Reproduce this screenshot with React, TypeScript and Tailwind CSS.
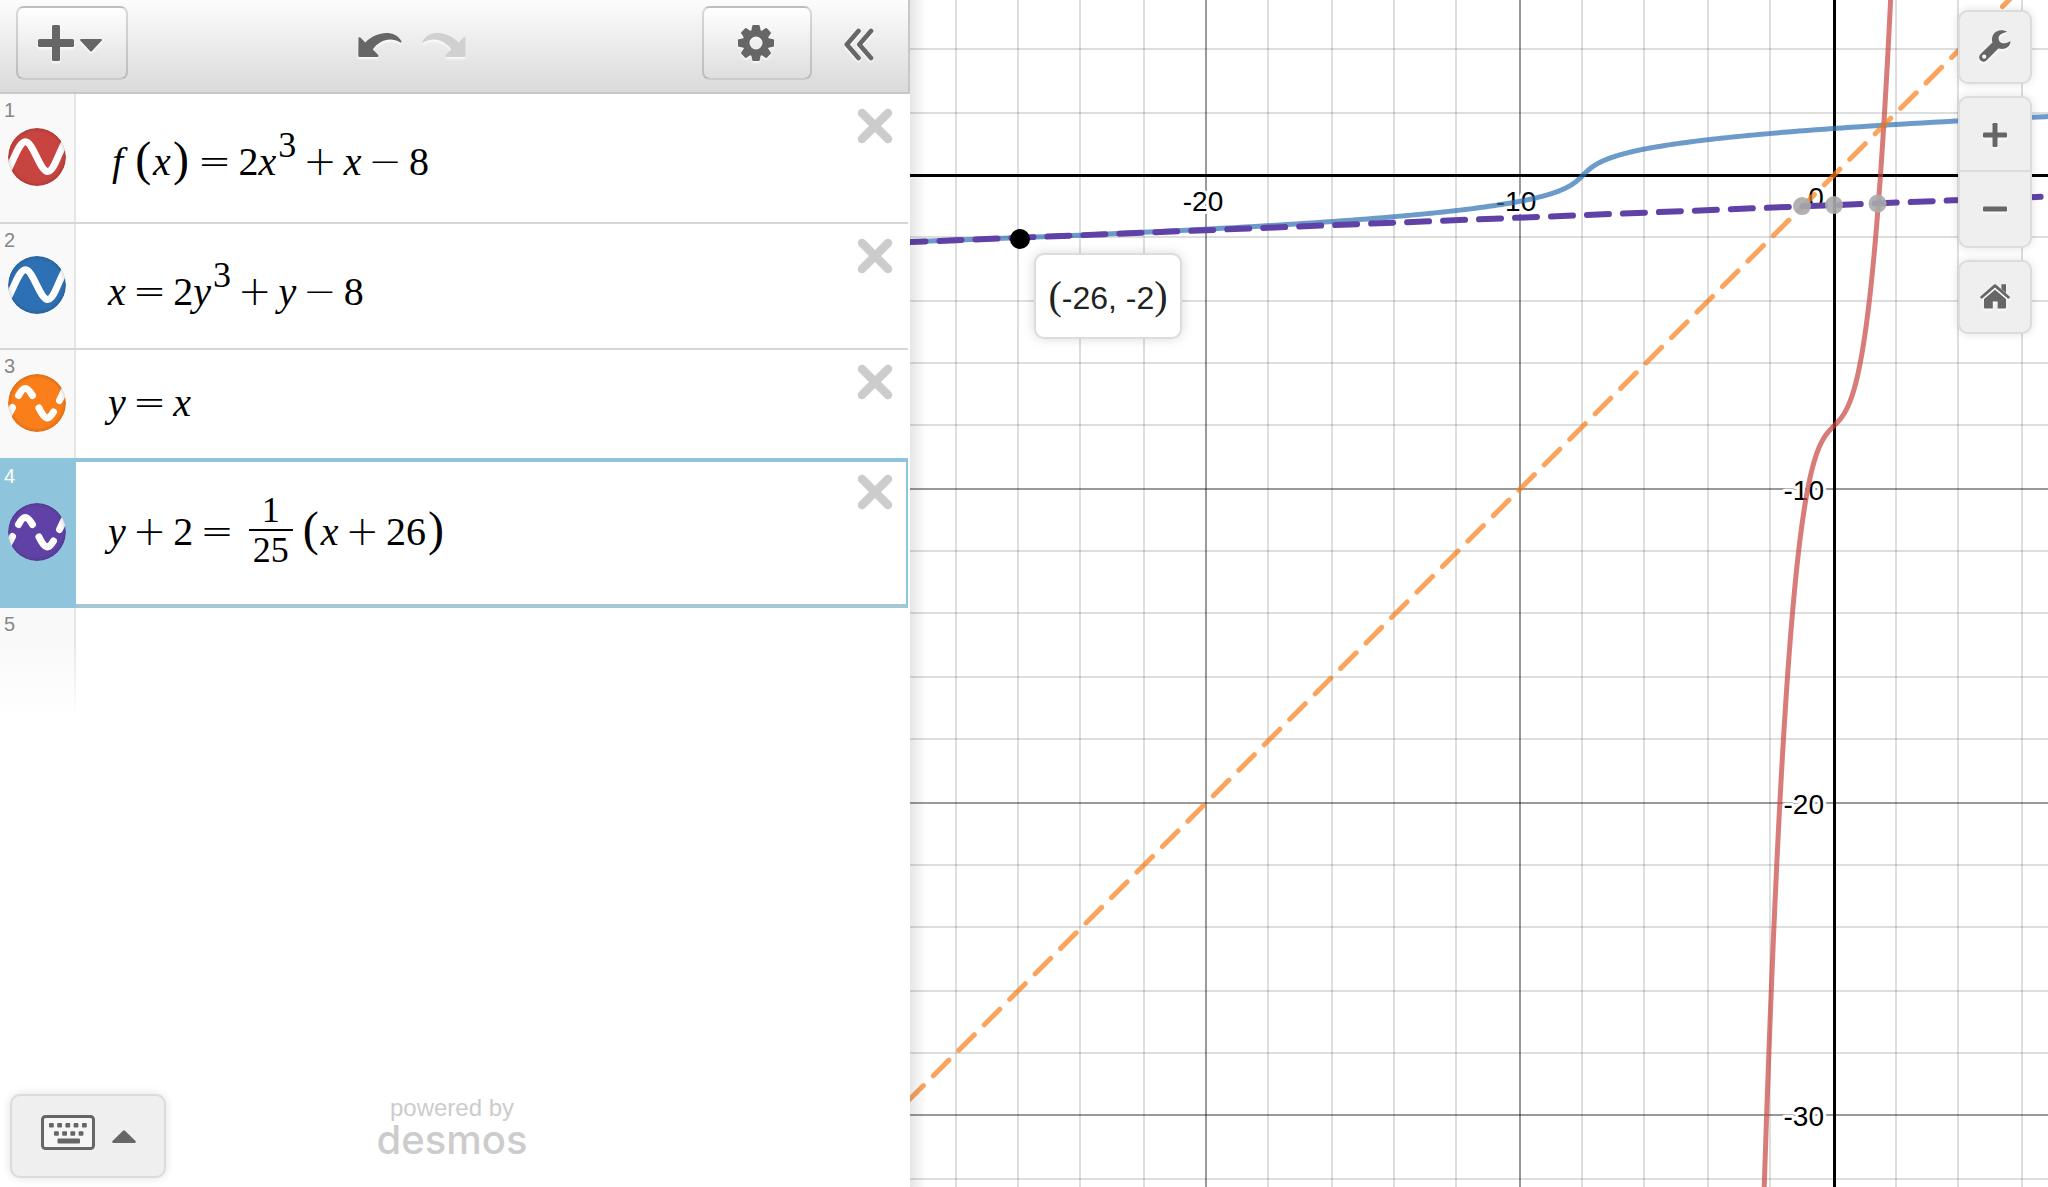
import type { ReactNode } from 'react';

type IconProps = { className?: string };

const ORIGIN_X = 924;
const ORIGIN_Y = 175;
const UNIT = 31.35;
const VIEW_W = 1138;
const VIEW_H = 1187;

const toX = (x: number) => ORIGIN_X + x * UNIT;
const toY = (y: number) => ORIGIN_Y - y * UNIT;

const range = (from: number, to: number, step: number) => {
  const out: number[] = [];
  for (let v = from; v <= to + step / 2; v += step) out.push(v);
  return out;
};

const cubic = (t: number) => 2 * t ** 3 + t - 8;
const tangent = (x: number) => (x + 26) / 25 - 2;

const toPath = (points: number[][]) =>
  points.map(([x, y], i) => `${i ? 'L' : 'M'}${toX(x).toFixed(2)} ${toY(y).toFixed(2)}`).join('');

const redPath = toPath(range(-3, 3, 0.02).map((t) => [t, cubic(t)]));
const bluePath = toPath(range(-3, 3, 0.02).map((t) => [cubic(t), t]));

// Grid lines sit on whole device pixels
const snapX = (x: number) => 2 * Math.floor(toX(x) / 2);
const snapY = (y: number) => 2 * Math.floor(toY(y) / 2) + 1;

const xTicks = range(-28, 6, 2).filter((v) => v !== 0);
const yTicks = range(-32, 4, 2).filter((v) => v !== 0);

function CloseIcon({ className }: IconProps) {
  return (
    <svg viewBox="0 0 36 36" className={className} aria-hidden="true">
      <path d="M5 5 31 31M31 5 5 31" stroke="currentColor" strokeWidth="8.5" strokeLinecap="round" />
    </svg>
  );
}

function GearIcon({ className }: IconProps) {
  return (
    <svg viewBox="-18 -18 36 36" className={className} fill="currentColor" aria-hidden="true">
      {[0, 45, 90, 135, 180, 225, 270, 315].map((a) => (
        <path key={a} transform={`rotate(${a})`} d="M-5 -11 -3.7 -17.2Q-3.5 -18 -2.7 -18H2.7Q3.5 -18 3.7 -17.2L5 -11Z" />
      ))}
      <circle r="9.9" fill="none" stroke="currentColor" strokeWidth="6.8" />
    </svg>
  );
}

function UndoIcon({ className }: IconProps) {
  return (
    <svg viewBox="0 0 44 24" className={className} fill="currentColor" aria-hidden="true">
      <path d="M.5 4.6Q1.4 3.6 2.6 4.8L7.3 9.4C18 -1 36 -4.5 43.6 8.4Q43.6 9.8 42 9.2C32 3.5 21 7.5 14.8 16.6L20 21.8Q21 23.4 19.4 24H2Q.3 24 .3 22.4Z" />
    </svg>
  );
}

function ChevronsIcon({ className }: IconProps) {
  return (
    <svg viewBox="0 0 30 33" className={className} fill="none" stroke="currentColor" strokeWidth="4.6" strokeLinecap="round" strokeLinejoin="round" aria-hidden="true">
      <path d="M14.5 3 2.8 16.5 14.5 30M27 3 15.3 16.5 27 30" />
    </svg>
  );
}

function KeyboardIcon({ className }: IconProps) {
  return (
    <svg viewBox="0 0 54 35" className={className} fill="currentColor" aria-hidden="true">
      <rect x="1.5" y="1.5" width="51" height="32" rx="3" fill="#f6f6f6" stroke="currentColor" strokeWidth="3" />
      {[8, 16.2, 24.4, 32.6, 41].map((x) => (
        <rect key={x} x={x} y="8" width="4.8" height="4.6" rx="1" />
      ))}
      {[13, 21.2, 29.4, 37.6].map((x) => (
        <rect key={x} x={x} y="16.2" width="4.8" height="4.6" rx="1" />
      ))}
      <rect x="16.5" y="23.6" width="22.5" height="4.8" rx="1" />
    </svg>
  );
}

function WrenchIcon({ className }: IconProps) {
  return (
    <svg viewBox="0 0 32 32" className={className} aria-hidden="true">
      <path
        fill="currentColor"
        fillRule="evenodd"
        d="M28 1.8C23.5 -.8 17 -.2 14 5C12.8 7.4 12.7 10 13.4 12.4L1.4 24.3A4.2 4.2 0 0 0 7.4 30.4L19.4 18.4C25.5 20 31 17.6 31.6 11.2L26.5 13.2C21.6 14 19 11 19.8 6.8C20.8 4.2 23.8 3 28 1.8ZM5.2 24.6A2.1 2.1 0 1 0 5.2 28.8 2.1 2.1 0 1 0 5.2 24.6Z"
      />
    </svg>
  );
}

function HomeIcon({ className }: IconProps) {
  return (
    <svg viewBox="0 0 30 26" className={className} fill="currentColor" aria-hidden="true">
      <path d="M21.4 1.2H26V10L21.4 6Z" />
      <path d="M1.6 14.2 15 2.6 28.4 14.2" fill="none" stroke="currentColor" strokeWidth="2.8" strokeLinecap="round" strokeLinejoin="round" />
      <path d="M15 6.8 26 16V24.6Q26 25.4 25.2 25.4H17.6V18.4H12.8V25.4H4.8Q4 25.4 4 24.6V16Z" />
    </svg>
  );
}

function PlusIcon({ className }: IconProps) {
  return (
    <svg viewBox="0 0 36 36" className={className} fill="currentColor" aria-hidden="true">
      <rect x="14" y="0" width="8" height="36" rx="1.5" />
      <rect x="0" y="14" width="36" height="8" rx="1.5" />
    </svg>
  );
}

function CurveIcon({ color, dashed }: { color: string; dashed?: boolean }) {
  const id = `clip-${color.slice(1)}`;
  return (
    <svg viewBox="0 0 58 58" className="size-[58px]" aria-hidden="true">
      <defs>
        <clipPath id={id}>
          <circle cx="29" cy="29" r="29" />
        </clipPath>
        <radialGradient id={`${id}-shade`}>
          <stop offset="0.85" stopColor="#000" stopOpacity="0" />
          <stop offset="1" stopColor="#000" stopOpacity="0.12" />
        </radialGradient>
      </defs>
      <g clipPath={`url(#${id})`} fill="none" stroke="#fff" strokeWidth="7" strokeLinecap="round">
        <circle cx="29" cy="29" r="29" fill={color} stroke="none" />
        {dashed ? (
          <path d="M10.5 21.5C15.5 12 19 12 24.5 21.5M31 34C37 46.5 40.5 46.5 45.5 38M51.5 26.5 56 17M0 42 4.5 33.5" />
        ) : (
          <path d="M-2 46C6 32 11 13.7 17.5 13.7C25 13.7 32 43.5 39.7 43.5C46 43.5 50 26 58 12" />
        )}
        <circle cx="29" cy="29" r="29" fill={`url(#${id}-shade)`} stroke="none" />
      </g>
    </svg>
  );
}

const Var = ({ children }: { children: ReactNode }) => <i>{children}</i>;

const Op = ({ children }: { children: ReactNode }) => (
  <span className="mx-[7px] font-['DejaVu_Sans'] font-extralight">{children}</span>
);

const Paren = ({ children }: { children: ReactNode }) => (
  <span className="mx-[2px] text-[48px]">{children}</span>
);

const Cubed = () => <span className="ml-[2px] -translate-y-[18px] text-[36px]">3</span>;

type Expression = {
  color: string;
  dashed?: boolean;
  rowClass: string;
  bodyClass: string;
  active?: boolean;
  body: ReactNode;
};

const expressions: Expression[] = [
  {
    color: '#c74440',
    rowClass: 'h-[130px] border-b-2 border-[#d6d6d6]',
    bodyClass: 'pt-[6px]',
    body: (
      <>
        <span className="mr-[10px] ml-1 italic">f</span>
        <Paren>(</Paren>
        <Var>x</Var>
        <Paren>)</Paren>
        <Op>=</Op>2<Var>x</Var>
        <Cubed />
        <Op>+</Op>
        <Var>x</Var>
        <Op>−</Op>8
      </>
    ),
  },
  {
    color: '#2d70b3',
    rowClass: 'h-[126px] border-b-2 border-[#d6d6d6]',
    bodyClass: 'pt-3',
    body: (
      <>
        <Var>x</Var>
        <Op>=</Op>2<Var>y</Var>
        <Cubed />
        <Op>+</Op>
        <Var>y</Var>
        <Op>−</Op>8
      </>
    ),
  },
  {
    color: '#fa7e19',
    dashed: true,
    rowClass: 'h-[108px]',
    bodyClass: 'pb-1',
    body: (
      <>
        <Var>y</Var>
        <Op>=</Op>
        <Var>x</Var>
      </>
    ),
  },
  {
    color: '#6042a6',
    dashed: true,
    rowClass: 'h-[150px] bg-[#8ec5dc]',
    bodyClass: 'pb-[6px]',
    active: true,
    body: (
      <>
        <Var>y</Var>
        <Op>+</Op>2<Op>=</Op>
        <span className="-my-5 mx-2 inline-flex flex-col self-center text-center text-[36px] leading-[38px]">
          <span className="border-b-2 border-black px-1">1</span>
          <span className="px-1">25</span>
        </span>
        <Paren>(</Paren>
        <Var>x</Var>
        <Op>+</Op>26
        <Paren>)</Paren>
      </>
    ),
  },
];

function ExpressionRow({ expr, index }: { expr: Expression; index: number }) {
  return (
    <li className={`flex ${expr.rowClass}`}>
      <div
        className={`relative flex w-[76px] shrink-0 items-center border-r-2 pb-[2px] pl-2 ${
          expr.active ? 'border-[#8ec5dc] text-white' : 'border-[#e6e6e6] bg-[#f9f9f9] text-[#888]'
        }`}
      >
        <span className={`absolute left-1 text-[20px] leading-6 ${expr.active ? 'top-[6px]' : 'top-1'}`}>{index + 1}</span>
        <button type="button" aria-label={`Toggle expression ${index + 1}`} className="rounded-full">
          <CurveIcon color={expr.color} dashed={expr.dashed} />
        </button>
      </div>
      <div
        className={`flex flex-1 items-start justify-between bg-white ${
          expr.active ? 'border-t-4 border-r-2 border-b-4 border-t-[#8ec5dc] border-r-[#8ec5dc] border-b-[#a5c6d3] pr-[13px]' : 'pr-[15px]'
        }`}
      >
        <div className={`flex h-full items-center pl-8 ${expr.bodyClass}`}>
          <div className="flex items-baseline font-['Liberation_Serif',serif] text-[40px] leading-[48px] text-black">
            {expr.body}
          </div>
        </div>
        <button type="button" aria-label={`Delete expression ${index + 1}`} className={`text-[#ccc] ${expr.active ? 'pt-3' : 'pt-[14px]'}`}>
          <CloseIcon className="size-9" />
        </button>
      </div>
    </li>
  );
}

function Toolbar() {
  const button =
    'flex h-[74px] items-center justify-center rounded-lg border-2 border-black/15 border-b-black/20 bg-linear-to-b from-white to-[#dedede]';
  return (
    <header className="flex h-[94px] items-start border-r-2 border-b-2 border-[#c8c8c8] bg-linear-to-b from-[#fcfcfc] to-[#dadada] pt-[6px] pr-[34px] pl-4 text-[#666] [&_svg]:drop-shadow-[0_2px_1px_rgba(255,255,255,0.8)]">
      <button type="button" aria-label="Add item" className={`${button} w-[112px] gap-[6px] pr-1`}>
        <PlusIcon className="size-9" />
        <svg viewBox="0 0 22 13" className="mt-1 h-[13px] w-[22px]" fill="currentColor" aria-hidden="true">
          <path d="M1 0H21Q22.5 .5 21.5 1.8L12 12Q11 13 10 12L.5 1.8Q-.5 .5 1 0Z" />
        </svg>
      </button>
      <div className="flex h-[78px] flex-1 items-center justify-center gap-5 pr-[6px]">
        <button type="button" aria-label="Undo">
          <UndoIcon className="h-6 w-11" />
        </button>
        <button type="button" aria-label="Redo" disabled className="text-[#d0d0d0]">
          <UndoIcon className="h-6 w-11 -scale-x-100" />
        </button>
      </div>
      <button type="button" aria-label="Edit list" className={`${button} w-[110px] pr-[2px]`}>
        <GearIcon className="size-9" />
      </button>
      <button type="button" aria-label="Hide list" className="ml-8 flex h-[76px] items-center">
        <ChevronsIcon className="h-[33px] w-[30px]" />
      </button>
    </header>
  );
}

function Sidebar() {
  return (
    <aside className="z-10 flex w-[910px] shrink-0 flex-col bg-white">
      <Toolbar />
      <div className="mr-[2px] flex flex-1 flex-col">
        <ol>
          {expressions.map((expr, i) => (
            <ExpressionRow key={expr.color} expr={expr} index={i} />
          ))}
          <li className="flex h-[110px]">
            <div className="relative w-[76px] border-r-2 border-[#e6e6e6] bg-[#f9f9f9] pt-1 pl-1 text-[20px] leading-6 text-[#888]">
              5
              <div className="absolute inset-y-0 left-0 w-[76px] bg-linear-to-b from-transparent from-30% to-white" />
            </div>
          </li>
        </ol>
        <footer className="relative mt-auto flex items-end justify-center pb-[9px]">
          <button
            type="button"
            aria-label="Show keypad"
            className="absolute bottom-[9px] left-[10px] flex h-[84px] w-[156px] items-center justify-center gap-[17px] rounded-[10px] border-2 border-[#dcdcdc] bg-[#efefef] pb-2 text-[#666] shadow-[0_0_10px_rgba(0,0,0,0.12)]"
          >
            <KeyboardIcon className="h-[35px] w-[54px]" />
            <svg viewBox="0 0 24 13" className="mt-2 h-[13px] w-6" fill="currentColor" aria-hidden="true">
              <path d="M11 .8Q12 -.2 13 .8L23.5 11Q24.4 12.6 22.8 13H1.2Q-.4 12.6 .5 11Z" />
            </svg>
          </button>
          <a href="#desmos" className="-ml-1 flex flex-col items-center pb-[18px] text-[#ccc]">
            <span className="text-[24px] leading-6">powered by</span>
            <span className="font-['Inter',sans-serif] text-[40px] leading-10 font-medium">desmos</span>
          </a>
        </footer>
      </div>
    </aside>
  );
}

function Graph() {
  const halo = 'fill-black stroke-white stroke-[6px] [paint-order:stroke] [stroke-linejoin:round]';
  return (
    <svg viewBox={`0 0 ${VIEW_W} ${VIEW_H}`} preserveAspectRatio="xMinYMin slice" className="absolute inset-0 size-full" role="img" aria-label="Graph">
      <g stroke="#000" strokeWidth="2">
        {xTicks.map((v) => (
          <line key={v} x1={snapX(v)} x2={snapX(v)} y1="0" y2={VIEW_H} strokeOpacity={v % 10 ? 0.13 : 0.4} />
        ))}
        {yTicks.map((v) => (
          <line key={v} x1="0" x2={VIEW_W} y1={snapY(v)} y2={snapY(v)} strokeOpacity={v % 10 ? 0.13 : 0.4} />
        ))}
      </g>
      <path d={`M924.5 0V${VIEW_H}M0 175.5H${VIEW_W}`} stroke="#000" strokeWidth="3" />

      <g className={`font-['Liberation_Sans',sans-serif] text-[28px] ${halo}`}>
        <text x="293" y="211" textAnchor="middle">-20</text>
        <text x="606" y="211" textAnchor="middle">-10</text>
        <text x="906" y="207" textAnchor="middle">0</text>
        {[-10, -20, -30].map((v) => (
          <text key={v} x="914" y={snapY(v) + 11} textAnchor="end">{v}</text>
        ))}
      </g>

      <g fill="none" strokeLinecap="round" strokeWidth="5">
        <path d={redPath} stroke="#c74440" strokeOpacity="0.7" />
        <path d={bluePath} stroke="#2d70b3" strokeOpacity="0.7" />
        <path
          d={toPath([[-32, -32], [8, 8]])}
          stroke="#fa7e19"
          strokeOpacity="0.7"
          strokeDasharray="22 14"
          strokeDashoffset="-1"
        />
        <path
          d={toPath([[-30, tangent(-30)], [8, tangent(8)]])}
          stroke="#6042a6"
          strokeWidth="6"
          strokeDasharray="22 14"
          strokeDashoffset="-10"
        />
      </g>

      <g fill="#aaa" fillOpacity="0.9">
        <circle cx={toX(-1.02)} cy={toY(-0.99)} r="9" />
        <circle cx={toX(0)} cy={toY(-0.96)} r="9" />
        <circle cx={toX(1.39)} cy={toY(-0.91)} r="9" />
      </g>
      <circle cx="110" cy="239" r="10" />
    </svg>
  );
}

const panelButton = 'flex w-full items-center justify-center';
const panel = 'rounded-[10px] border-2 border-[#dcdcdc] bg-[#efefef] shadow-[0_0_10px_rgba(0,0,0,0.12)]';

function GraphControls() {
  return (
    <div className="absolute top-[10px] right-4 flex w-[74px] flex-col gap-3 text-[#666] [&_svg]:drop-shadow-[0_2px_1px_rgba(255,255,255,0.8)]">
      <div className={panel}>
        <button type="button" aria-label="Graph settings" className={`${panelButton} h-[70px] pb-[2px]`}>
          <WrenchIcon className="size-8" />
        </button>
      </div>
      <div className={panel}>
        <button type="button" aria-label="Zoom in" className={`${panelButton} h-[72px] pt-[2px]`}>
          <svg viewBox="0 0 24 24" className="size-6" fill="currentColor" aria-hidden="true">
            <rect x="9.5" width="5" height="24" rx="1.2" />
            <rect y="9.5" width="24" height="5" rx="1.2" />
          </svg>
        </button>
        <button type="button" aria-label="Zoom out" className={`${panelButton} h-[76px] border-t-2 border-[#dcdcdc]`}>
          <svg viewBox="0 0 24 6" className="h-[6px] w-6" fill="currentColor" aria-hidden="true">
            <rect y=".5" width="24" height="5" rx="1.2" />
          </svg>
        </button>
      </div>
      <div className={panel}>
        <button type="button" aria-label="Default view" className={`${panelButton} h-[70px] pb-[2px]`}>
          <HomeIcon className="h-[26px] w-[30px]" />
        </button>
      </div>
    </div>
  );
}

export default function App() {
  return (
    <div className="flex h-screen overflow-hidden bg-white font-['Liberation_Sans',Arial,sans-serif]">
      <Sidebar />
      <main className="relative flex-1 overflow-hidden">
        <Graph />
        <div className="absolute inset-y-0 left-0 w-4 bg-linear-to-r from-black/10 to-transparent" />
        <div className="absolute top-[253px] left-[124px] flex h-[86px] w-[148px] items-center justify-center rounded-[10px] border-2 border-[#dcdcdc] bg-white text-[32px] text-[#222] shadow-[0_0_12px_rgba(0,0,0,0.15)]">
          <span className="flex items-baseline">
            <span className="font-['Liberation_Serif',serif] text-[40px]">(</span>
            -26, -2
            <span className="font-['Liberation_Serif',serif] text-[40px]">)</span>
          </span>
        </div>
        <GraphControls />
      </main>
    </div>
  );
}
